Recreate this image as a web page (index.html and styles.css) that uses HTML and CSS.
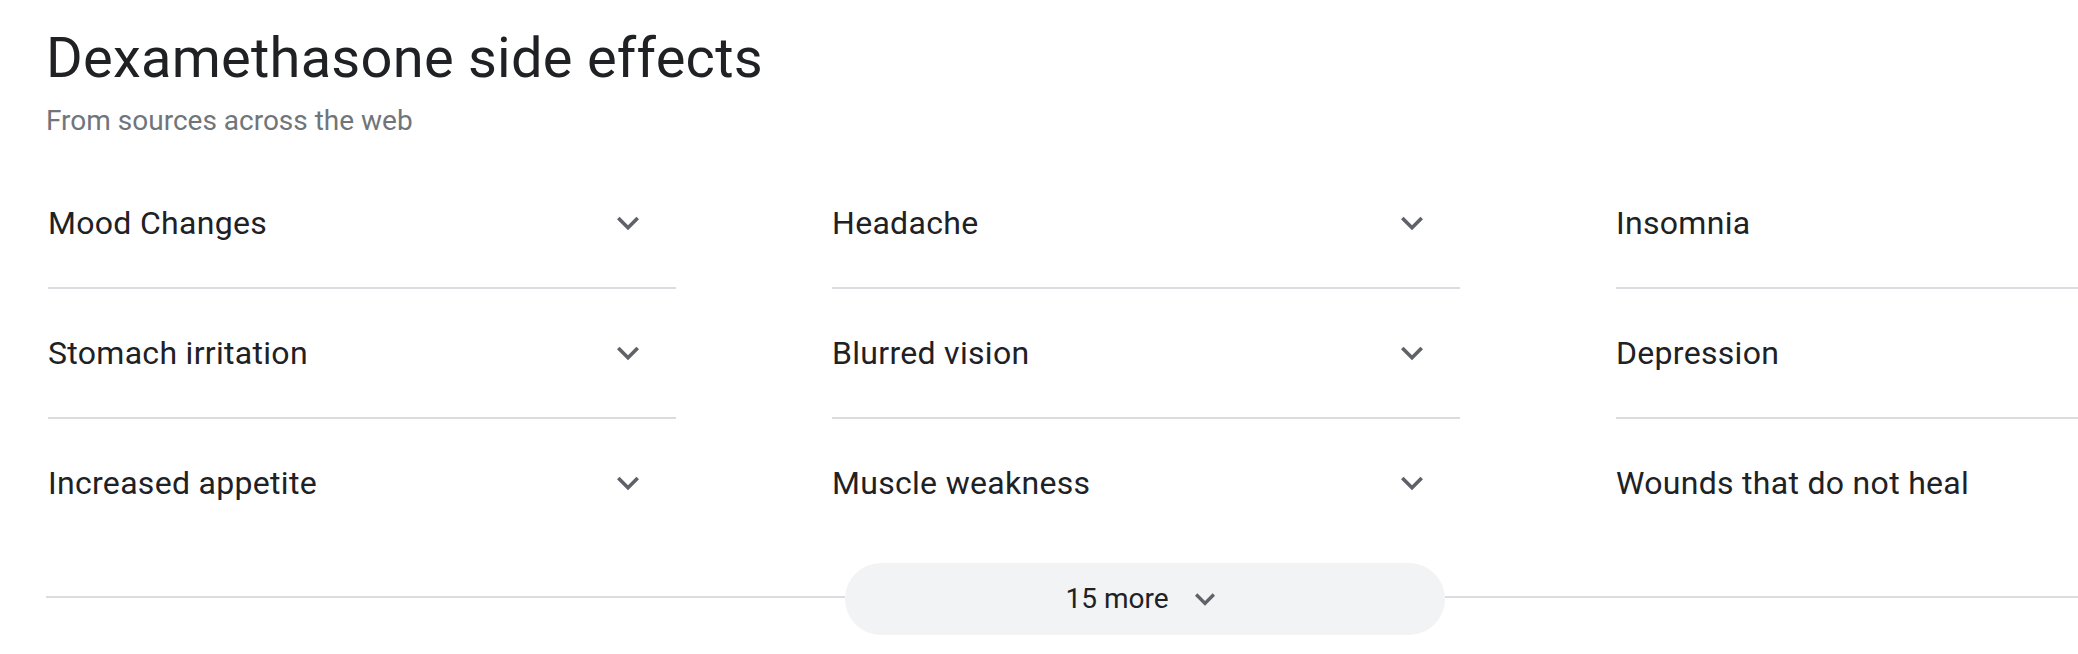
FILE: index.html
```html
<!DOCTYPE html>
<html lang="en">
<head>
<meta charset="utf-8">
<title>Dexamethasone side effects</title>
<link rel="stylesheet" href="styles.css">
</head>
<body>
<div class="panel">
  <h2 class="title">Dexamethasone side effects</h2>
  <div class="subtitle">From sources across the web</div>
  <div class="grid">
    <div class="item"><span class="label">Mood Changes</span><svg class="chev" viewBox="0 0 24 24"><path d="M16.59 8.59L12 13.17 7.41 8.59 6 10l6 6 6-6z"/></svg></div>
    <div class="item"><span class="label">Headache</span><svg class="chev" viewBox="0 0 24 24"><path d="M16.59 8.59L12 13.17 7.41 8.59 6 10l6 6 6-6z"/></svg></div>
    <div class="item"><span class="label">Insomnia</span><svg class="chev" viewBox="0 0 24 24"><path d="M16.59 8.59L12 13.17 7.41 8.59 6 10l6 6 6-6z"/></svg></div>
    <div class="item"><span class="label">Stomach irritation</span><svg class="chev" viewBox="0 0 24 24"><path d="M16.59 8.59L12 13.17 7.41 8.59 6 10l6 6 6-6z"/></svg></div>
    <div class="item"><span class="label">Blurred vision</span><svg class="chev" viewBox="0 0 24 24"><path d="M16.59 8.59L12 13.17 7.41 8.59 6 10l6 6 6-6z"/></svg></div>
    <div class="item"><span class="label">Depression</span><svg class="chev" viewBox="0 0 24 24"><path d="M16.59 8.59L12 13.17 7.41 8.59 6 10l6 6 6-6z"/></svg></div>
    <div class="item"><span class="label">Increased appetite</span><svg class="chev" viewBox="0 0 24 24"><path d="M16.59 8.59L12 13.17 7.41 8.59 6 10l6 6 6-6z"/></svg></div>
    <div class="item"><span class="label">Muscle weakness</span><svg class="chev" viewBox="0 0 24 24"><path d="M16.59 8.59L12 13.17 7.41 8.59 6 10l6 6 6-6z"/></svg></div>
    <div class="item"><span class="label">Wounds that do not heal</span><svg class="chev" viewBox="0 0 24 24"><path d="M16.59 8.59L12 13.17 7.41 8.59 6 10l6 6 6-6z"/></svg></div>
  </div>
  <div class="more">
    <span class="rule"></span>
    <button class="more-btn" type="button"><span class="more-text">15 more</span><svg class="chev-sm" viewBox="0 0 24 24"><path d="M16.59 8.59L12 13.17 7.41 8.59 6 10l6 6 6-6z"/></svg></button>
    <span class="rule"></span>
  </div>
</div>
</body>
</html>
```
FILE: styles.css
```css
html, body {
  margin: 0;
  padding: 0;
  background: #ffffff;
}
body {
  overflow: hidden;
  font-family: Roboto, "Liberation Sans", Arial, sans-serif;
  color: #202124;
}
.panel {
  width: 2198px;
  padding: 26px 0 0 46px;
}
.title {
  margin: 0;
  font-size: 56px;
  line-height: 64px;
  font-weight: 400;
  letter-spacing: 0.25px;
  color: #202124;
}
.subtitle {
  margin-top: 13px;
  font-size: 28px;
  line-height: 36px;
  color: #70757a;
}
.grid {
  margin-top: 20px;
  padding-left: 2px;
  display: grid;
  grid-template-columns: repeat(3, 628px);
  column-gap: 156px;
}
.item {
  height: 128px;
  display: flex;
  align-items: center;
  justify-content: space-between;
  padding-right: 26px;
  border-bottom: 2px solid #dadce0;
}
.item:nth-child(n+7) {
  border-bottom: none;
}
.label {
  font-size: 32px;
  line-height: 40px;
  letter-spacing: 0.3px;
  color: #202124;
}
.chev {
  width: 44px;
  height: 44px;
  fill: #5f6368;
  flex: none;
}
.more {
  margin-top: 16px;
  height: 72px;
  display: flex;
  align-items: center;
}
.rule {
  flex: 1;
  height: 2px;
  margin-bottom: 5px;
  background: #dadce0;
}
.more-btn {
  width: 600px;
  height: 72px;
  border: none;
  border-radius: 36px;
  background: #f1f3f4;
  display: flex;
  align-items: center;
  justify-content: center;
  gap: 16px;
  padding: 0;
  font-family: Roboto, "Liberation Sans", Arial, sans-serif;
  font-size: 28px;
  color: #202124;
}
.more-text {
  line-height: 36px;
}
.chev-sm {
  width: 40px;
  height: 40px;
  fill: #5f6368;
  flex: none;
}
```
